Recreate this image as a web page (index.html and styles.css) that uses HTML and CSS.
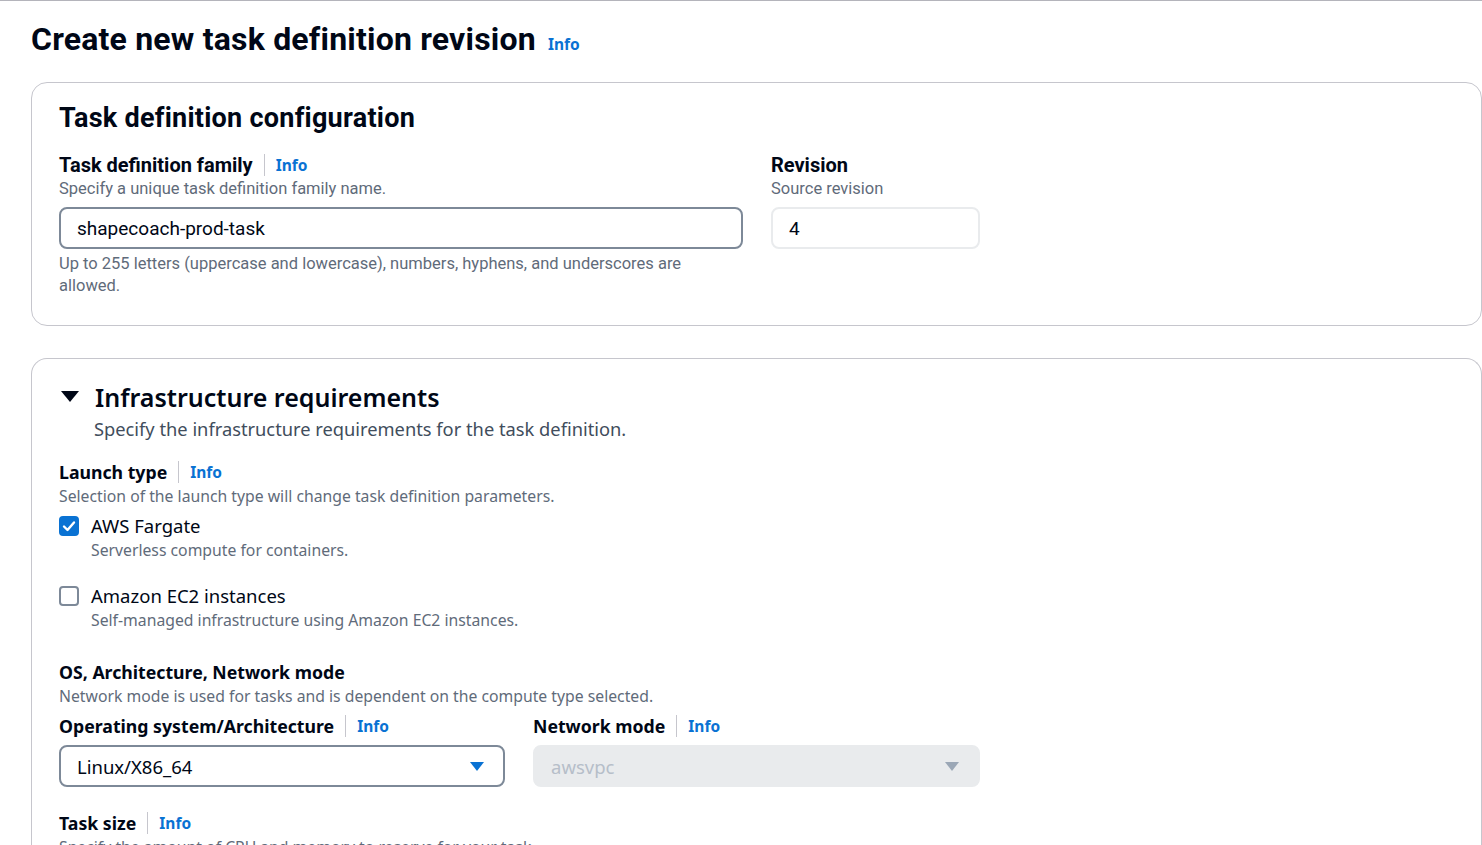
FILE: index.html
```html
<!DOCTYPE html>
<html lang="en">
<head>
<meta charset="utf-8">
<title>Create new task definition revision</title>
<link rel="stylesheet" href="styles.css">
</head>
<body>
<div class="page">
  <header class="page-header">
    <h1 class="page-title">Create new task definition revision</h1>
    <a class="info info-title" href="#">Info</a>
  </header>

  <section class="card card-config">
    <h2 class="card-title">Task definition configuration</h2>
    <div class="config-grid">
      <div class="field">
        <div class="label-row"><span class="label">Task definition family</span><span class="sep"></span><a class="info" href="#">Info</a></div>
        <div class="desc">Specify a unique task definition family name.</div>
        <div class="input">shapecoach-prod-task</div>
        <div class="hint">Up to 255 letters (uppercase and lowercase), numbers, hyphens, and underscores are allowed.</div>
      </div>
      <div class="field">
        <div class="label-row"><span class="label">Revision</span></div>
        <div class="desc">Source revision</div>
        <div class="input input-readonly">4</div>
      </div>
    </div>
  </section>

  <section class="card card-infra">
    <div class="expander">
      <svg class="caret-down" width="18" height="12" viewBox="0 0 18 12"><polygon points="0,0 18,0 9,11" fill="#000716"/></svg>
      <h2 class="card-title infra-title">Infrastructure requirements</h2>
    </div>
    <div class="infra-desc">Specify the infrastructure requirements for the task definition.</div>

    <div class="group group-launch">
      <div class="label-row"><span class="label">Launch type</span><span class="sep"></span><a class="info" href="#">Info</a></div>
      <div class="desc">Selection of the launch type will change task definition parameters.</div>
      <div class="option">
        <span class="checkbox checked"><svg width="20" height="20" viewBox="0 0 20 20"><polyline points="5,10.5 8.5,14 15,6.5" fill="none" stroke="#fff" stroke-width="2.4" stroke-linecap="round" stroke-linejoin="round"/></svg></span>
        <div class="option-text">
          <div class="option-label">AWS Fargate</div>
          <div class="desc">Serverless compute for containers.</div>
        </div>
      </div>
      <div class="option option-second">
        <span class="checkbox"></span>
        <div class="option-text">
          <div class="option-label">Amazon EC2 instances</div>
          <div class="desc">Self-managed infrastructure using Amazon EC2 instances.</div>
        </div>
      </div>
    </div>

    <div class="group group-os">
      <div class="label-row"><span class="label">OS, Architecture, Network mode</span></div>
      <div class="desc">Network mode is used for tasks and is dependent on the compute type selected.</div>
      <div class="os-grid">
        <div class="field">
          <div class="label-row"><span class="label">Operating system/Architecture</span><span class="sep"></span><a class="info" href="#">Info</a></div>
          <div class="select">
            <span>Linux/X86_64</span>
            <svg width="16" height="11" viewBox="0 0 16 11"><polygon points="1,1 15,1 8,10" fill="#0972d3"/></svg>
          </div>
        </div>
        <div class="field">
          <div class="label-row"><span class="label">Network mode</span><span class="sep"></span><a class="info" href="#">Info</a></div>
          <div class="select select-disabled">
            <span>awsvpc</span>
            <svg width="16" height="11" viewBox="0 0 16 11"><polygon points="1,1 15,1 8,10" fill="#9ba7b6"/></svg>
          </div>
        </div>
      </div>
    </div>

    <div class="group group-size">
      <div class="label-row"><span class="label">Task size</span><span class="sep"></span><a class="info" href="#">Info</a></div>
      <div class="desc">Specify the amount of CPU and memory to reserve for your task.</div>
    </div>
  </section>
</div>
</body>
</html>
```

FILE: styles.css
```css
* { box-sizing: border-box; }

html, body {
  margin: 0;
  padding: 0;
  background: #ffffff;
  color: #000716;
  font-family: "Noto Sans", "Open Sans", sans-serif;
  overflow: hidden;
}

.page {
  border-top: 1px solid #b4b4bb;
  padding: 17px 0 0 31px;
  height: 845px;
  overflow: hidden;
}

.page-header {
  display: flex;
  align-items: baseline;
  gap: 12px;
  height: 40px;
  margin-bottom: 24px;
}

.page-title {
  margin: 0;
  font-family: Roboto, sans-serif;
  font-weight: 700;
  font-size: 32px;
  line-height: 42px;
  letter-spacing: 0.2px;
}

.info {
  color: #0972d3;
  font-weight: 700;
  text-decoration: none;
  font-size: 15.5px;
  font-family: "Noto Sans", sans-serif;
}

.info-title { font-size: 15.5px; }

.card {
  border: 1px solid #c6c6cd;
  border-radius: 16px;
  width: 1451px;
}

.card-config {
  padding: 19px 27px 28px 27px;
  font-family: Roboto, sans-serif;
}

.card-title {
  margin: 0;
  font-weight: 700;
  font-size: 27px;
  line-height: 32px;
  letter-spacing: 0.25px;
  font-family: Roboto, sans-serif;
}

.config-grid {
  display: grid;
  grid-template-columns: 684px 209px;
  column-gap: 28px;
  margin-top: 19px;
}

.label-row {
  display: flex;
  align-items: center;
  height: 24px;
}

.label {
  font-weight: 700;
  font-size: 17.7px;
  line-height: 24px;
}

.sep {
  width: 1px;
  height: 22px;
  background: #c6c6cd;
  margin: 0 11px;
}

.desc {
  color: #5f6b7a;
  font-size: 15.75px;
  line-height: 22px;
  margin-top: 1px;
}

.input {
  margin-top: 7px;
  height: 42px;
  border: 2px solid #7d8998;
  border-radius: 8px;
  padding: 0 16px;
  display: flex;
  align-items: center;
  font-size: 19px;
}

.input-readonly {
  border-color: #e9ebed;
}

.hint {
  margin-top: 4px;
  color: #5f6b7a;
  font-size: 16.5px;
  line-height: 22px;
}

.card-config .label {
  font-family: Roboto, sans-serif;
  font-size: 20px;
}

.card-config .desc,
.card-config .hint {
  font-family: Roboto, sans-serif;
  font-size: 16.5px;
}

.card-config .input {
  font-family: Roboto, sans-serif;
}

.card-infra {
  margin-top: 32px;
  padding: 22px 27px 0 27px;
  height: 520px;
  border-bottom: none;
  border-bottom-left-radius: 0;
  border-bottom-right-radius: 0;
}

.expander {
  display: flex;
  align-items: center;
  gap: 16px;
  padding-left: 2px;
}

.caret-down { display: block; }

.infra-title {
  font-family: "Noto Sans", sans-serif;
  font-weight: 600;
  font-size: 25px;
  letter-spacing: 0;
}

.infra-desc {
  margin-top: 4px;
  padding-left: 35px;
  font-size: 18.3px;
  line-height: 24px;
  color: #414d5c;
}

.group-launch { margin-top: 19px; }

.option {
  display: flex;
  align-items: flex-start;
  gap: 12px;
  margin-top: 7px;
}

.option-second { margin-top: 23px; }

.checkbox {
  flex: none;
  width: 20px;
  height: 20px;
  margin-top: 2px;
  border: 2px solid #7d8998;
  border-radius: 4px;
  background: #fff;
  display: block;
}

.checkbox.checked {
  border: none;
  background: #0972d3;
}

.checkbox svg { display: block; }

.option-label {
  font-size: 18.5px;
  line-height: 24px;
}

.group-os { margin-top: 29px; }

.os-grid {
  display: grid;
  grid-template-columns: 446px 447px;
  column-gap: 28px;
  margin-top: 7px;
}

.select {
  margin-top: 7px;
  height: 42px;
  border: 2px solid #7d8998;
  border-radius: 8px;
  padding: 0 18px 0 16px;
  display: flex;
  align-items: center;
  justify-content: space-between;
  font-size: 18.5px;
}

.select svg { display: block; }

.select-disabled {
  background: #e9ebed;
  border-color: #e9ebed;
  color: #b6bec9;
}

.group-size { margin-top: 24px; }
```
